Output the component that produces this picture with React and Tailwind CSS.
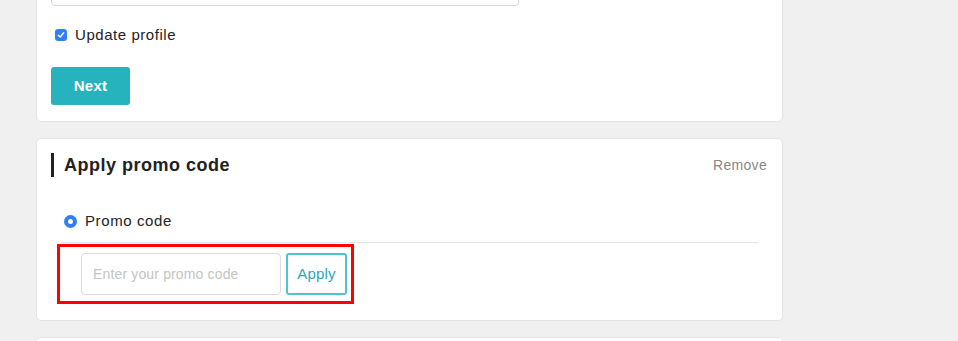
export default function App() {
  return (
    <div
      className="min-h-[341px] bg-[#f0f0f0] pl-[36px] pr-[175px] overflow-hidden text-[#222]"
      style={{ fontFamily: '"Liberation Sans", Arial, sans-serif' }}
    >
      {/* profile card (scrolled, only the bottom shows) */}
      <div className="-mt-[50px] bg-white border border-[#e4e4e4] rounded-[5px] pt-[15px] pb-[16px] px-[14px]">
        <div className="w-[468px] h-[40px] border border-[#d9d9d9] rounded-[4px]" />

        <label className="mt-[19px] flex items-center h-5 pl-[4px]">
          <span className="w-[12px] h-[12px] rounded-[3px] bg-[#2f7ff6] flex items-center justify-center">
            <svg width="8" height="8" viewBox="0 0 8 8" fill="none">
              <path d="M1.3 4.2 L3.2 6 L6.7 1.8" stroke="white" strokeWidth="1.4" strokeLinecap="round" strokeLinejoin="round" />
            </svg>
          </span>
          <span className="ml-[8px] text-[15px] tracking-[0.55px]">Update profile</span>
        </label>

        <button className="mt-[22px] w-[79px] h-[38px] rounded-[3px] bg-[#26b3bd] text-white text-[15px] font-bold tracking-[0.3px]">
          Next
        </button>
      </div>

      {/* promo card */}
      <div className="mt-[16px] bg-white border border-[#e4e4e4] rounded-[5px] pt-[14px] pb-[16px] px-[14px]">
        <div className="flex items-center justify-between h-[24px]">
          <div className="flex items-center h-full">
            <span className="w-[3px] h-full bg-[#222]" />
            <h2 className="ml-[10px] pt-px text-[18px] font-bold tracking-[0.5px]">Apply promo code</h2>
          </div>
          <button className="pt-px text-[14px] text-[#888] tracking-[0.3px] pr-px">Remove</button>
        </div>

        <div className="mx-[10px] mt-[34px] pb-[11px] border-b border-[#e6e6e6]">
          <label className="flex items-center h-5 pl-[3px]">
            <span className="w-[13px] h-[13px] rounded-full bg-[#2f7ff6] flex items-center justify-center">
              <span className="w-[5px] h-[5px] rounded-full bg-white" />
            </span>
            <span className="ml-[8px] text-[15px] tracking-[0.6px]">Promo code</span>
          </label>
        </div>

        <div className="ml-[6px] mt-px w-[297px] border-[3px] border-[#f00] pl-[21px] pr-[4px] pt-[6px] pb-[6px] flex items-center gap-[5px]">
          <input
            placeholder="Enter your promo code"
            className="w-[200px] h-[42px] border border-[#dcdcdc] rounded-[4px] px-[11px] text-[14px] tracking-[0.15px] placeholder:text-[#c4c4c4] outline-none"
          />
          <button className="w-[61px] h-[42px] border-2 border-[#4fc4cb] rounded-[3px] text-[15px] text-[#2aa9b2] tracking-[0.2px]">
            Apply
          </button>
        </div>
      </div>

      <div className="mt-[16px] h-[40px] bg-white border border-[#e4e4e4] rounded-[5px]" />
    </div>
  );
}
